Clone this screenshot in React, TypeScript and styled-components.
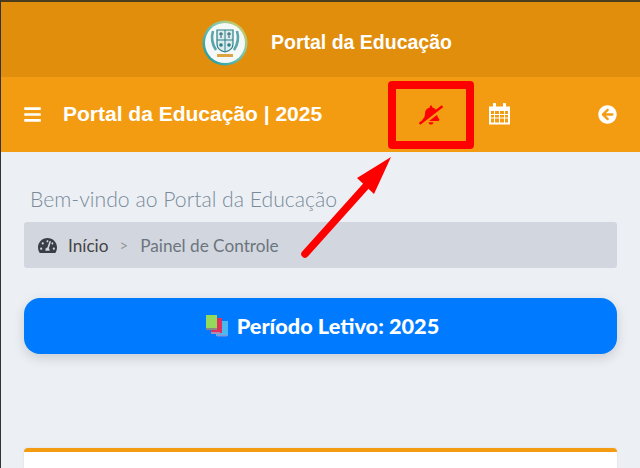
import React from 'react';
import styled, { createGlobalStyle } from 'styled-components';
import { FaBars, FaBellSlash, FaArrowCircleLeft, FaTachometerAlt } from 'react-icons/fa';

const Global = createGlobalStyle`
  html, body { margin: 0; padding: 0; background: #ecf0f5; overflow: hidden; }
  body { font-family: Lato, "Noto Sans", sans-serif; }
`;
const Page = styled.div`
  position: relative; width: 640px; height: 468px; overflow: hidden;
  border-left: 1px solid #333; border-top: 2px solid #4a3c1c; box-sizing: border-box;
`;
const TopBar = styled.header`
  height: 75px; background: #e08e0b; display: flex; align-items: center; justify-content: center; gap: 23px; padding-left: 13px;
`;
const LogoWrap = styled.span`
  display: flex; margin-top: 6px;
`;
const Brand = styled.span`
  font: 700 19.5px "Liberation Sans", sans-serif; color: #fff; margin-top: 6px;
`;
const NavBar = styled.nav`
  height: 75px; background: #f39c12; display: flex; align-items: center; color: #fff;
`;
const Burger = styled.span`
  display: flex; margin-left: 22px; font-size: 19px; width: 40px; flex: none;
`;
const NavTitle = styled.span`
  font: 700 21px "Liberation Sans", sans-serif; flex: 0 0 325px; margin-top: -1px;
`;
const SlashIcon = styled.span`
  display: flex; justify-content: center; flex: 0 0 86px; color: #f00; font-size: 24px;
  svg { transform: scaleX(-1); }
`;
const CalendarIcon = styled.span`
  display: flex; justify-content: center; flex: 0 0 50px; margin-top: -2px;
`;
const BackIcon = styled.span`
  display: flex; margin-left: auto; margin-right: 23px; font-size: 19px;
`;
const Main = styled.main`
  padding: 33px 23px 0;
`;
const Welcome = styled.h1`
  margin: 0 0 9px 6px; font: 300 21.2px/28px Lato, sans-serif; color: #7a8a99;
`;
const Crumbs = styled.div`
  height: 46px; background: #d2d6de; border-radius: 3px; display: flex; align-items: center; padding-left: 14px;
  font-size: 17.2px; color: #444; box-sizing: border-box;
`;
const Gauge = styled.span`
  display: flex; font-size: 19px; color: #3a3f47; margin-right: 11px;
`;
const Sep = styled.span`
  color: #999; margin: 0 12px 0 11px; font-size: 15px;
`;
const Current = styled.span`
  color: #6c757d;
`;
const PeriodButton = styled.button`
  display: flex; align-items: center; justify-content: center; gap: 8px; width: 100%; height: 56px; margin-top: 30px;
  background: #007bff; color: #fff; border: 0; border-radius: 16px; font: 900 21.7px Lato, sans-serif;
  box-shadow: 0 4px 12px rgba(0,0,0,.15); padding: 0 0 0 4px;
`;
const Card = styled.section`
  height: 60px; margin-top: 94px; background: #fff; border-top: 4px solid #f39c12; border-radius: 4px 4px 0 0;
  box-shadow: 0 0 2px rgba(0,0,0,.1);
`;
const Highlight = styled.div`
  position: absolute; left: 387px; top: 79px; width: 86px; height: 68px; box-sizing: border-box;
  border: 8px solid #f00; border-radius: 4px;
`;
const Arrow = styled.svg`
  position: absolute; left: 290px; top: 140px; width: 110px; height: 130px;
`;

const Logo = () => (
  <svg width="46" height="46" viewBox="0 0 46 46">
    <defs>
      <linearGradient id="ring" x1="0" y1="1" x2="1" y2="0">
        <stop offset="0" stopColor="#0f93a3" /><stop offset=".6" stopColor="#7fc8b0" /><stop offset="1" stopColor="#f0c93c" />
      </linearGradient>
    </defs>
    <circle cx="23" cy="23" r="22.5" fill="url(#ring)" />
    <circle cx="23" cy="23" r="20" fill="#f4f8f6" />
    <path d="M15 10h16v14q0 6-8 8q-8-2-8-8z" fill="#dcecec" stroke="#2b7f88" strokeWidth="1.2" />
    <path d="M23 10v22M15 20h16" stroke="#2b7f88" strokeWidth="1" />
    <path d="M19 12v6M17 14h4M27 12v6M25 14h4" stroke="#1d5f6a" strokeWidth="1" />
    <circle cx="19" cy="25" r="1.8" fill="#2b7f88" /><circle cx="27" cy="25" r="1.8" fill="#2b7f88" />
    <path d="M11 11q-3 10 3 19M35 11q3 10-3 19" stroke="#5aa4ab" strokeWidth="2.6" fill="none" />
    <rect x="15" y="34" width="16" height="3" fill="#d9a441" />
  </svg>
);
const Calendar = () => (
  <svg width="21" height="22" viewBox="0 0 21 22">
    <path d="M1 4.5h19v16H1z" fill="none" stroke="#fff" strokeWidth="2" />
    <path d="M1 4h19v4H1z" fill="#fff" />
    <path d="M5.5 1v5M15.5 1v5" stroke="#fff" strokeWidth="3" strokeLinecap="round" />
    <path d="M1 11.5h19M1 15h19M5.5 8v12M10.5 8v12M15.5 8v12" stroke="#fff" strokeWidth="1" />
  </svg>
);
const Books = () => (
  <svg width="23" height="22" viewBox="0 0 23 22">
    <rect x="10" y="6" width="12" height="15" fill="#4db8ef" />
    <rect x="11" y="20" width="10" height="1.5" fill="#8f8fd8" />
    <rect x="5" y="3" width="11" height="15" fill="#e0315c" />
    <rect x="5" y="17" width="9" height="2" fill="#b08ab0" />
    <rect x="0" y="0" width="11" height="14" fill="#93d95c" />
    <rect x="0" y="13" width="11" height="2" fill="#888" />
  </svg>
);

export default function App() {
  return (
    <Page>
      <Global />
      <TopBar><LogoWrap><Logo /></LogoWrap><Brand>Portal da Educação</Brand></TopBar>
      <NavBar>
        <Burger><FaBars /></Burger>
        <NavTitle>Portal da Educação | 2025</NavTitle>
        <SlashIcon><FaBellSlash /></SlashIcon>
        <CalendarIcon><Calendar /></CalendarIcon>
        <BackIcon><FaArrowCircleLeft /></BackIcon>
      </NavBar>
      <Main>
        <Welcome>Bem-vindo ao Portal da Educação</Welcome>
        <Crumbs>
          <Gauge><FaTachometerAlt /></Gauge>
          <span>Início</span><Sep>&gt;</Sep><Current>Painel de Controle</Current>
        </Crumbs>
        <PeriodButton><Books />Período Letivo: 2025</PeriodButton>
        <Card />
      </Main>
      <Highlight />
      <Arrow viewBox="0 0 110 130">
        <path d="M14 112L75 44" stroke="#f00" strokeWidth="7.5" strokeLinecap="round" />
        <path d="M100 15L66 36L83 52z" fill="#f00" />
      </Arrow>
    </Page>
  );
}
